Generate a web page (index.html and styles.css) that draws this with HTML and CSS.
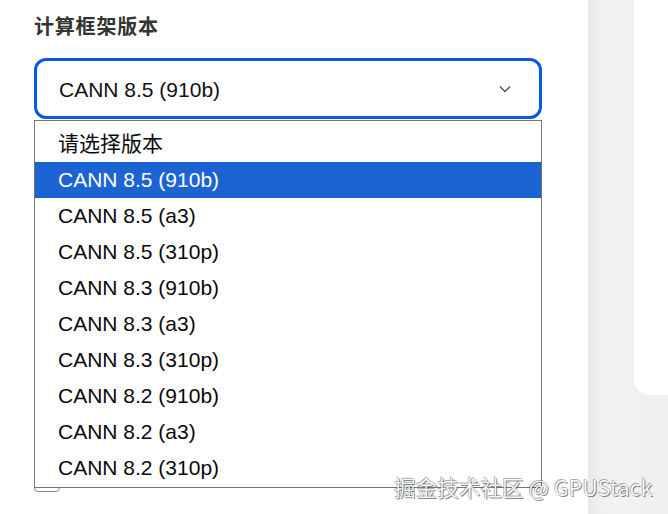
FILE: index.html
```html
<!DOCTYPE html>
<html lang="zh">
<head>
<meta charset="utf-8">
<title>计算框架版本</title>
<link rel="stylesheet" href="styles.css">
</head>
<body>
<div class="page">
  <main class="main">
    <div class="label">计算框架版本</div>
    <div class="select-wrap">
      <div class="select">
        <span class="select-value">CANN 8.5 (910b)</span>
        <svg class="chevron" width="12" height="8" viewBox="0 0 12 8"><polyline points="1,1.5 6,6.5 11,1.5" fill="none" stroke="#555" stroke-width="1.4"/></svg>
      </div>
      <ul class="dropdown">
        <li class="opt">请选择版本</li>
        <li class="opt active">CANN 8.5 (910b)</li>
        <li class="opt">CANN 8.5 (a3)</li>
        <li class="opt">CANN 8.5 (310p)</li>
        <li class="opt">CANN 8.3 (910b)</li>
        <li class="opt">CANN 8.3 (a3)</li>
        <li class="opt">CANN 8.3 (310p)</li>
        <li class="opt">CANN 8.2 (910b)</li>
        <li class="opt">CANN 8.2 (a3)</li>
        <li class="opt">CANN 8.2 (310p)</li>
      </ul>
    </div>
    <div class="under">
      <div class="under-box"></div>
    </div>
  </main>
  <aside class="side">
    <div class="card"></div>
  </aside>
</div>
<div class="watermark">掘金技术社区 @ GPUStack</div>
</body>
</html>
```
FILE: styles.css
```css
html, body {
  margin: 0;
  padding: 0;
  width: 668px;
  height: 514px;
  overflow: hidden;
  background: #fff;
  font-family: "Liberation Sans", "Noto Sans CJK SC", sans-serif;
}
.page {
  display: flex;
  width: 668px;
  height: 514px;
}
.main {
  width: 588px;
  flex: none;
  box-sizing: border-box;
  padding: 12px 0 0 34px;
}
.label {
  font-family: "Noto Sans CJK SC", sans-serif;
  font-weight: 700;
  font-size: 20px;
  line-height: 28px;
  color: #333;
  letter-spacing: 0.8px;
}
.select-wrap {
  position: relative;
  margin-top: 18px;
  width: 508px;
}
.select {
  box-sizing: border-box;
  height: 61px;
  border: 3px solid #0b57e0;
  border-radius: 12px;
  display: flex;
  align-items: center;
  justify-content: space-between;
  padding: 0 28px 0 22px;
  font-size: 21px;
  color: #111;
}
.select-value {
  padding-top: 2px;
}
.chevron {
  display: block;
}
.dropdown {
  position: absolute;
  top: 62px;
  left: 0;
  width: 508px;
  box-sizing: border-box;
  margin: 0;
  padding: 5px 0 1px;
  list-style: none;
  background: #fff;
  border: 1px solid #767676;
  z-index: 2;
}
.opt {
  height: 36px;
  line-height: 36px;
  padding-left: 23px;
  font-size: 21px;
  color: #0a0a0a;
}
.opt.active {
  background: #1c63d3;
  color: #fff;
}
.under {
  padding-top: 347px;
}
.under-box {
  width: 26px;
  height: 26px;
  box-sizing: border-box;
  border: 1px solid #8a8a8a;
  border-radius: 4px;
}
.side {
  flex: 1;
  background: linear-gradient(to right, #e8e8e8 0px, #f1f1f1 14px, #f2f2f2 40px, #f0f0f0 46px);
  padding-left: 46px;
}
.card {
  height: 395px;
  background: #fff;
  border-bottom-left-radius: 16px;
}
.watermark {
  position: absolute;
  left: 394px;
  top: 473px;
  z-index: 10;
  font-family: "Noto Sans CJK SC", sans-serif;
  font-size: 21.6px;
  line-height: 28px;
  color: #f8f8f8;
  text-shadow: 1px 1px 0 rgba(0,0,0,0.45), -0.6px -0.6px 0 rgba(0,0,0,0.3), 0 0 1px rgba(0,0,0,0.4);
  white-space: nowrap;
}
```
